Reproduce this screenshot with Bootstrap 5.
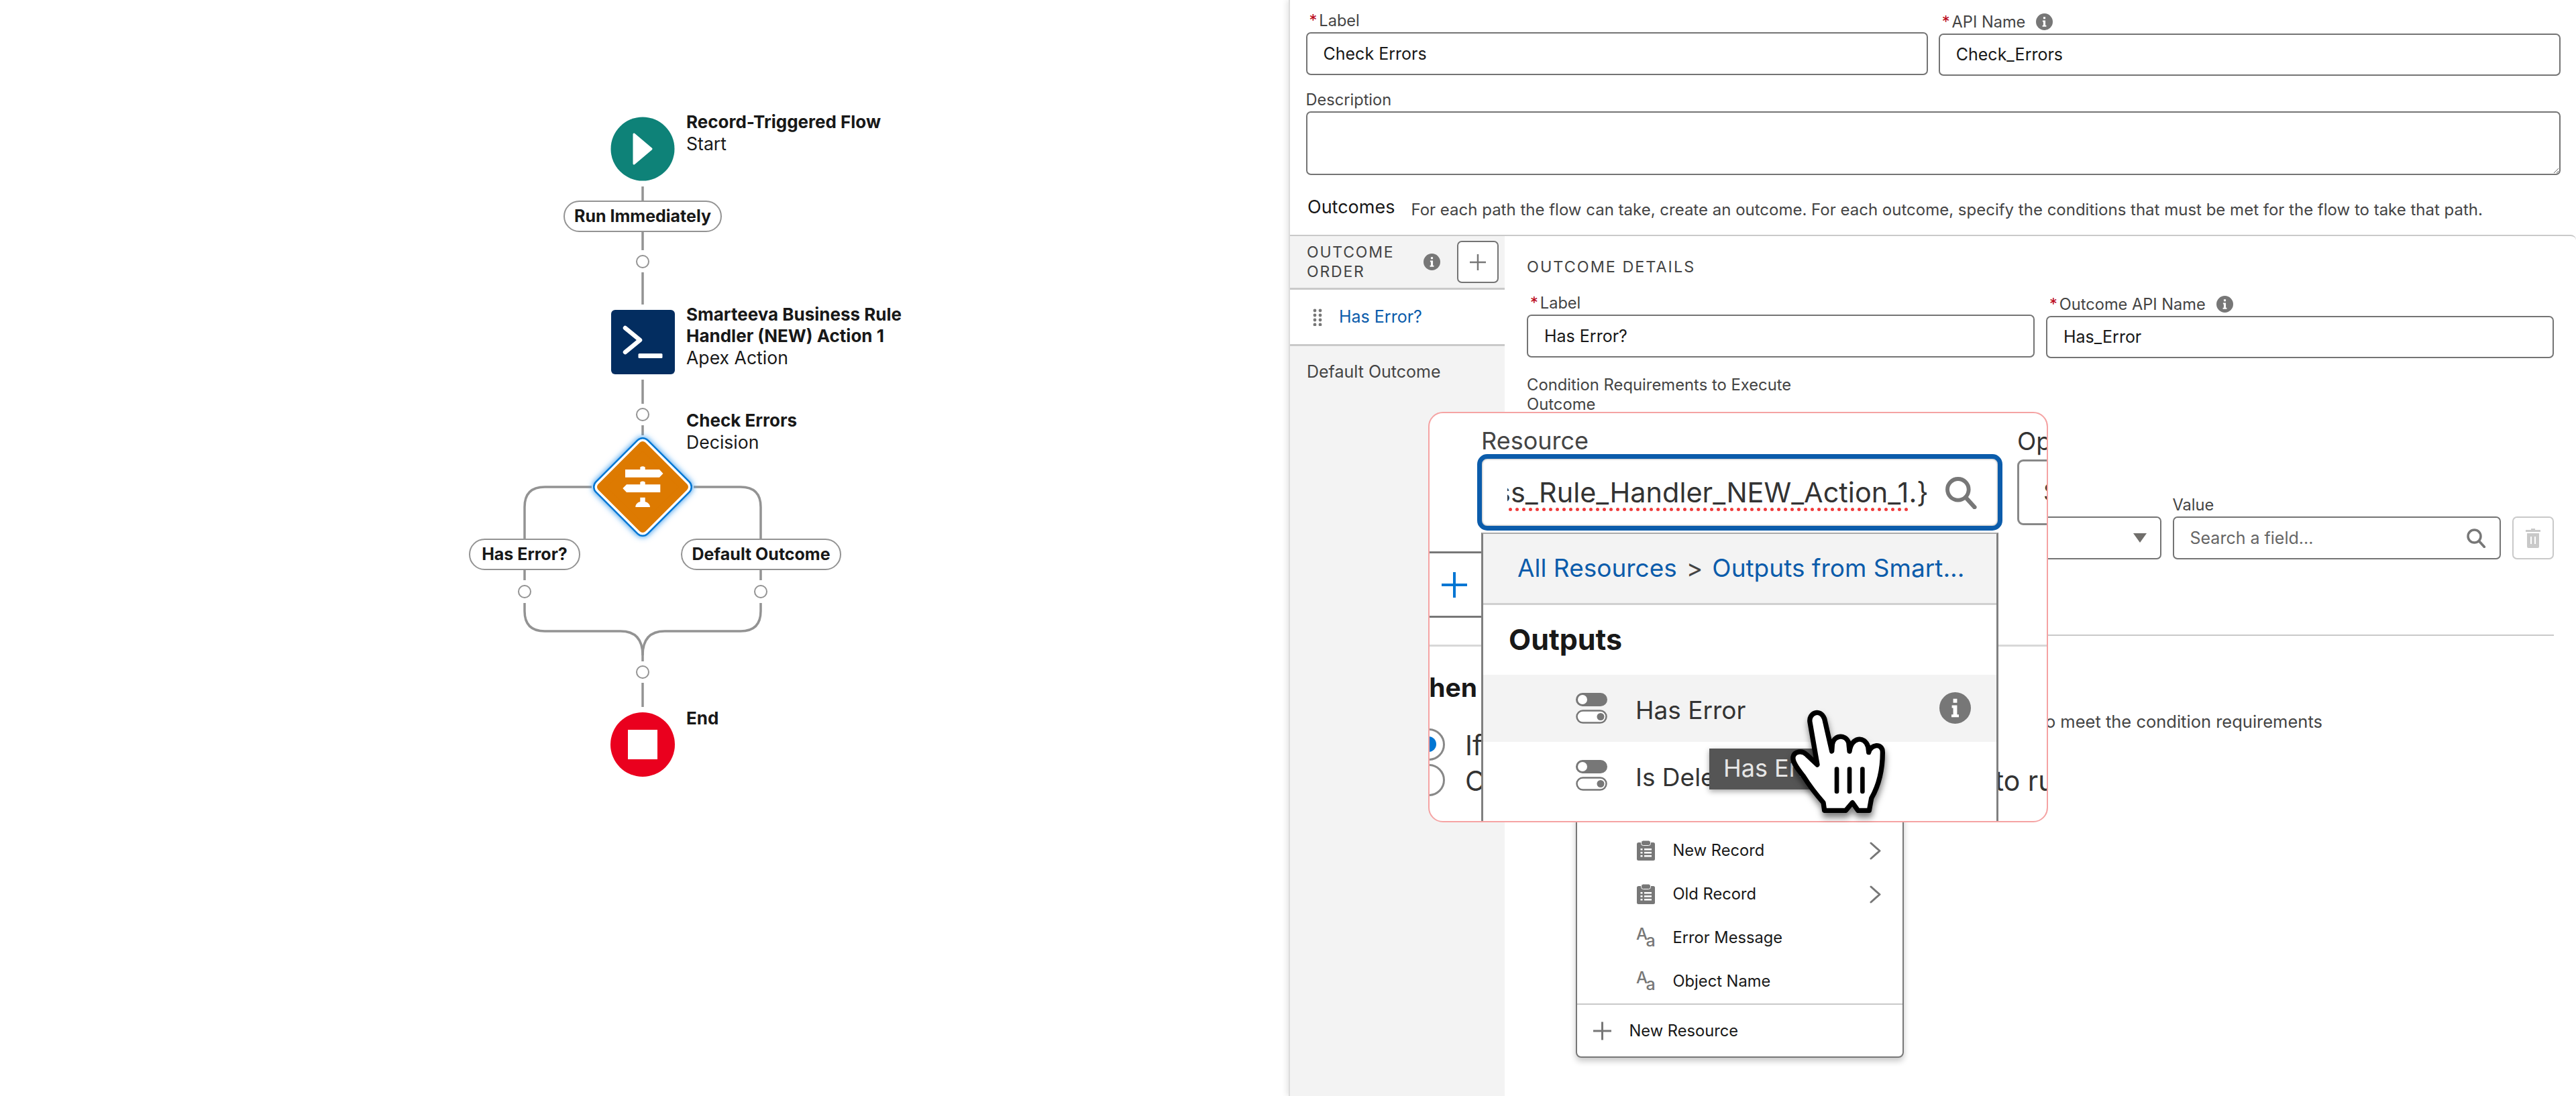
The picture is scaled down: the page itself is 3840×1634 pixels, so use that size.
<!DOCTYPE html>
<html lang="en">
<head>
  <meta charset="UTF-8" />
  <title>Flow Builder - Check Errors</title>
  <link href="https://cdn.jsdelivr.net/npm/bootstrap@5.3.0/dist/css/bootstrap.min.css" rel="stylesheet" />
  <style>
    body { margin: 0; background: #fff; color: #181818; font-family: "Inter", "Liberation Sans", sans-serif; }
    .sf-page { width: 3840px; height: 1634px; position: relative; overflow: hidden; }

    /* left: flow canvas */
    .flow-canvas { width: 1921px; height: 1634px; position: relative; flex: none; }
    .flow-lines { position: absolute; left: 0; top: 0; }
    .flow-label { position: absolute; left: 1023px; font-size: 26.6px; line-height: 32px; color: #181818; white-space: nowrap; }
    .flow-label b { font-weight: 700; font-size: 26px; display: block; }
    .fl-start { top: 166px; }
    .fl-apex { top: 453px; }
    .fl-check { top: 611px; }
    .fl-end { top: 1055px; }
    .flow-pill { position: absolute; height: 47px; border: 2.5px solid #939393; border-radius: 24px; background: #fff; font-size: 25px; font-weight: 700; display: flex; align-items: center; justify-content: center; white-space: nowrap; }
    .fp-run { left: 840px; top: 299px; width: 236px; }
    .fp-err { left: 699px; top: 803px; width: 166px; }
    .fp-def { left: 1015px; top: 803px; width: 239px; }

    /* right: properties panel */
    .sf-panel { flex: 1 1 auto; min-width: 0; border-left: 2px solid #dcdcdc; box-shadow: -3px 0 8px rgba(0,0,0,.10); background: #fff; display: flex; flex-direction: column; height: 1634px; }
    .sf-top { padding: 16px 23px 0 23.5px; }
    .sf-label { display: block; margin: 0 0 2px; font-size: 23.6px; line-height: 30px; color: #444; white-space: nowrap; }
    .sf-label i { color: #ba0517; font-style: normal; margin: 0 3px 0 5px; }
    .sf-desc-label { margin-top: 20.5px; }
    .sf-input.form-control { height: 63.5px; border: 2.5px solid #747474; border-radius: 7px; padding: 0 24px; font-size: 25px; color: #181818; box-shadow: none; }
    .sf-input::placeholder { color: #666; }
    .sf-info { width: 25px; height: 25px; flex: none; }
    .sf-desc.form-control { height: 95px; border: 2.5px solid #747474; border-radius: 7px; box-shadow: none; }
    .sf-out { height: 36px; margin-top: 30.5px; margin-bottom: 23px; padding-left: 2.5px; }
    .sf-out h2 { margin: 0; font-size: 27px; line-height: 36px; font-weight: 400; color: #181818; }
    .sf-out p { margin: 8px 0 0 24px; font-size: 24px; line-height: 28px; color: #444; white-space: nowrap; }
    .sf-box { flex: 1 1 auto; display: flex; min-height: 0; border-top: 2px solid #c9c9c9; border-top-right-radius: 8px; }
    .sf-side { width: 320px; flex: none; background: #f3f3f3; }
    .sf-side-head { height: 80px; padding: 0 9px 0 25px; display: flex; align-items: center; border-bottom: 3px solid #c9c9c9; }
    .sf-side-head span { flex: 1 1 auto; font-size: 23px; line-height: 29px; letter-spacing: 1.8px; color: #444; }
    .sf-add { width: 62px; height: 63px; margin-left: 25px; padding: 0; background: #fff; border: 2px solid #747474; border-radius: 7px; display: flex; align-items: center; justify-content: center; }
    .sf-side .list-group-item { border: 0; border-bottom: 3px solid #c9c9c9; border-radius: 0; background: #f3f3f3; font-size: 25px; color: #444; display: flex; align-items: center; padding: 0 0 3px 25px; height: 81px; }
    .sf-side .list-group-item.sf-active { background: #fff; color: #0b5cab; height: 84px; padding: 0 0 0 34px; gap: 24px; }
    .sf-body { flex: 1 1 auto; min-width: 0; padding: 0 33px; }
    .sf-caps { margin: 31px 0 0; font-size: 23.4px; line-height: 30px; letter-spacing: 2px; color: #444; }
    .sf-row { margin-top: 24px; gap: 17px; }
    .sf-row > div { flex: 1 1 0; }
    .sf-shift { padding-top: 1.5px; }
    .sf-cond { margin: 26px 0 0; width: 450px; font-size: 23.8px; line-height: 28.5px; color: #444; }
    .sf-logic { margin-top: 121px; gap: 17px; }
    .sf-select { width: 181px; height: 63.6px; border: 2.5px solid #747474; border-radius: 7px; margin-top: 32px; padding-right: 20px; display: flex; align-items: center; justify-content: flex-end; }
    .sf-caret { width: 0; height: 0; border-left: 10px solid transparent; border-right: 10px solid transparent; border-top: 14px solid #706e6b; }
    .sf-value { width: 489px; position: relative; }
    .sf-value svg { position: absolute; right: 22px; top: 49px; width: 30px; height: 30px; }
    .sf-trash { width: 62.5px; height: 63.6px; margin-top: 32px; background: #fff; border: 2px solid #c9c9c9; border-radius: 7px; padding: 0; display: flex; align-items: center; justify-content: center; }
    .sf-rule { margin: 112px 0 0; border: 0; border-top: 2px solid #c9c9c9; opacity: 1; }
    .sf-only { margin: 113px 0 0; padding-left: 63px; font-size: 25.5px; line-height: 30px; color: #444; white-space: nowrap; }

    /* resource menu, below the magnifier */
    .res-menu { position: absolute; left: 2348.5px; top: 1190px; width: 489px; height: 386.5px; background: #fff; border: 2.5px solid #777; border-radius: 0 0 8px 8px; box-shadow: 0 5px 10px rgba(0,0,0,.22); padding-top: 43.5px; font-size: 23.7px; color: #181818; }
    .res-item { height: 65px; display: flex; align-items: center; padding: 0 32px 0 89px; gap: 27px; }
    .res-item svg.ri { width: 27px; height: 30px; flex: none; overflow: visible; }
    .res-item svg.rc { width: 17px; height: 27px; margin-left: auto; flex: none; }
    .res-new { border-top: 2.5px solid #c9c9c9; height: 80px; padding-left: 24px; }

    /* magnified region */
    .mag { position: absolute; left: 2129px; top: 613.5px; width: 924px; height: 612.5px; border: 2px solid #f5a3a3; border-radius: 22px; background: #fff; overflow: hidden; font-size: 37px; color: #333; }
    .mag-bar { position: absolute; left: 0; top: 206.5px; width: 90px; height: 99px; border-top: 3.5px solid #777; border-bottom: 3.5px solid #777; display: flex; align-items: center; padding-left: 18px; }
    .mag-rule { position: absolute; left: 0; right: 0; top: 345px; border-top: 3px solid #d8d8d8; }
    .mag-when { position: absolute; left: 0; width: 71px; top: 386px; line-height: 46px; font-size: 39px; font-weight: 700; display: flex; justify-content: flex-end; overflow: hidden; color: #181818; }
    .mag-radio { position: absolute; left: -25px; width: 48px; height: 48px; border: 3.5px solid #888; border-radius: 50%; background: #fff; }
    .mag-radio.on::after { content: ""; position: absolute; left: 9px; top: 9px; width: 23px; height: 23px; border-radius: 50%; background: #0176d3; }
    .mag-r1 { top: 470.5px; }
    .mag-r2 { top: 523.5px; }
    .mag-opt { position: absolute; left: 53px; line-height: 46px; font-size: 41px; white-space: nowrap; }
    .mag-o1 { top: 472px; }
    .mag-o2 { top: 525px; }
    .mag-op { position: absolute; left: 876px; top: 20px; line-height: 44px; }
    .mag-opf { position: absolute; left: 876px; top: 69px; width: 120px; height: 98px; border: 3.5px solid #888; border-radius: 9px; padding-left: 36px; line-height: 91px; }
    .mag-col { position: relative; margin-left: 71px; width: 783px; padding-top: 21.5px; }
    .mag-col > label { display: block; margin: 0; padding-left: 6px; line-height: 40px; color: #444; font-size: 36px; }
    .mag-field { height: 113.5px; border: 7px solid #0b5cab; border-radius: 15px; background: #fff; display: flex; align-items: center; padding-left: 38px; box-shadow: inset 0 0 3px rgba(0,0,0,.5); }
    .mag-text { width: 628px; display: flex; justify-content: flex-end; overflow: hidden; white-space: nowrap; line-height: 62px; font-size: 41.4px; }
    .mag-text u { text-decoration: underline dotted #f03b3b 5px; text-underline-offset: 8px; }
    .mag-field svg { width: 50px; height: 50px; margin-left: 23px; flex: none; }
    .mag-drop { margin: 3px 0 0 6px; width: 771px; height: 432px; border-left: 3.5px solid #808080; border-right: 3.5px solid #808080; border-top: 2px solid #aaa; background: #fff; }
    .mag-crumb { height: 106px; background: #f3f3f3; border-bottom: 3.5px solid #d0d0d0; padding-left: 51px; display: flex; align-items: center; gap: 14px; white-space: nowrap; color: #444; }
    .mag-crumb a { color: #0b5cab; text-decoration: none; }
    .mag-head { height: 104px; padding-left: 38px; margin: 0; display: flex; align-items: center; font-size: 43px; font-weight: 700; color: #181818; }
    .mag-item { height: 100px; padding: 0 38px 0 138px; display: flex; align-items: center; gap: 42px; }
    .mag-item span { padding-top: 6px; }
    .mag-item.on { background: #f3f3f3; }
    .mag-item .mt { width: 47px; height: 46px; flex: none; }
    .mag-item .mi { width: 47px; height: 47px; margin-left: auto; flex: none; }
    .mag-tip { position: absolute; left: 417px; top: 500.5px; width: 170px; height: 61px; background: #555; color: #e6e6e6; padding-left: 21px; line-height: 58px; font-size: 36px; white-space: nowrap; overflow: hidden; box-shadow: 0 3px 8px rgba(0,0,0,.35); }

    .sf-hand { position: absolute; left: 2663px; top: 1050px; width: 153.4px; height: 166.7px; overflow: visible; filter: drop-shadow(1px 7px 5px rgba(0,0,0,.5)); }
  </style>
</head>
<body>

  <!-- shared icons -->
  <svg width="0" height="0" class="position-absolute">
    <symbol id="ic-info" viewBox="0 0 24 24">
      <circle cx="12" cy="12" r="12" fill="#777"/>
      <path d="M10.5 5h3v3h-3zM9.5 10h4v7h1.3v2H9.2v-2h1.3v-5h-1z" fill="#fff"/>
    </symbol>
    <symbol id="ic-search" viewBox="0 0 24 24">
      <circle cx="10" cy="10" r="7.6" fill="none" stroke="#777" stroke-width="2.8"/>
      <path d="M15.6 15.8 21.8 22.6" stroke="#777" stroke-width="3" stroke-linecap="round"/>
    </symbol>
    <symbol id="ic-toggle" viewBox="0 0 47 46">
      <rect x="0" y="0" width="47" height="20" rx="10" fill="#777"/>
      <circle cx="10" cy="10" r="7" fill="#fff"/>
      <rect x="1.5" y="26.5" width="44" height="18" rx="9" fill="#fff" stroke="#777" stroke-width="2.5"/>
      <circle cx="37" cy="35.5" r="5.5" fill="#777"/>
    </symbol>
    <symbol id="ic-clip" viewBox="0 0 27 30">
      <rect x="0" y="3" width="27" height="27" rx="2.5" fill="#777"/>
      <rect x="6.5" y="0" width="14" height="7.5" rx="3" fill="#777" stroke="#fff" stroke-width="1"/>
      <path d="M5.5 12h3v2.4h-3zM11 12h11v2.4H11zM5.5 17h3v2.4h-3zM11 17h11v2.4H11zM5.5 22h3v2.4h-3zM11 22h11v2.4H11z" fill="#fff"/>
    </symbol>
    <symbol id="ic-aa" viewBox="0 0 28 30" overflow="visible">
      <text x="-1" y="18" font-family="Inter, sans-serif" font-size="25" font-weight="500" fill="#777">A</text>
      <text x="14" y="29" font-family="Inter, sans-serif" font-size="26" font-weight="500" fill="#777">a</text>
    </symbol>
    <symbol id="ic-chev" viewBox="0 0 17 27">
      <path d="M2 2 15 13.5 2 25" fill="none" stroke="#777" stroke-width="3" stroke-linecap="round" stroke-linejoin="round"/>
    </symbol>
  </svg>

  <div class="sf-page d-flex">

    <!-- Canvas do fluxo -->
    <section class="flow-canvas">
      <svg class="flow-lines" width="1921" height="1634" viewBox="0 0 1921 1634">
        <defs>
          <filter id="glow" x="-30%" y="-30%" width="160%" height="160%"><feGaussianBlur stdDeviation="4"/></filter>
        </defs>
        <g fill="none" stroke="#939393" stroke-width="3.5">
          <path d="M958 278V299M958 345V373M958 406V454M958 566V602M958 634V649"/>
          <path d="M882 726H812Q782 726 782 756V803M782 850V865M782 899V911Q782 941 812 941H925Q958 941 958 977V986"/>
          <path d="M1034 726H1104Q1134 726 1134 756V803M1134 850V865M1134 899V911Q1134 941 1104 941H991Q958 941 958 977"/>
          <path d="M958 1018V1054"/>
        </g>
        <g fill="#fff" stroke="#939393" stroke-width="2">
          <circle cx="958" cy="390" r="9"/>
          <circle cx="958" cy="618" r="9"/>
          <circle cx="782" cy="882" r="9"/>
          <circle cx="1134" cy="882" r="9"/>
          <circle cx="958" cy="1002" r="9"/>
        </g>
        <!-- start -->
        <circle cx="958" cy="222" r="47.5" fill="#0e8278"/>
        <path d="M945 200 971 222 945 244Z" fill="#fff" stroke="#fff" stroke-width="3" stroke-linejoin="round"/>
        <!-- apex -->
        <rect x="911" y="462" width="95" height="96" rx="6" fill="#032d60"/>
        <path d="M932 489 954 507 932 525" fill="none" stroke="#fff" stroke-width="6.5" stroke-linecap="round" stroke-linejoin="round"/>
        <rect x="951.5" y="527" width="36" height="7" rx="1.5" fill="#fff"/>
        <!-- decision -->
        <path d="M958 664 1020 726 958 788 896 726Z" fill="#4aa3ee" stroke="#4aa3ee" stroke-width="26" stroke-linejoin="round" filter="url(#glow)"/>
        <path d="M958 664 1020 726 958 788 896 726Z" fill="#0176d3" stroke="#0176d3" stroke-width="24" stroke-linejoin="round"/>
        <path d="M958 664 1020 726 958 788 896 726Z" fill="#fff" stroke="#fff" stroke-width="19" stroke-linejoin="round"/>
        <path d="M958 664 1020 726 958 788 896 726Z" fill="#dd7a01" stroke="#dd7a01" stroke-width="12" stroke-linejoin="round"/>
        <path d="M932 700H954.3V696.5Q958 694 961.7 696.5V700H983L988.5 706 983 711.7H932ZM934 722.3H954.3V718.8Q958 716.3 961.7 718.8V722.3H984.3V734H934L928.3 728ZM954.3 741.7H961.7V748C966 749 969 752 969 756H947.3C947.3 752 950 749 954.3 748Z" fill="#fff"/>
        <!-- end -->
        <circle cx="958" cy="1110" r="48" fill="#ea001e"/>
        <rect x="936" y="1088" width="44" height="44" fill="#fff"/>
      </svg>

      <div class="flow-label fl-start"><b>Record-Triggered Flow</b>Start</div>
      <div class="flow-pill fp-run">Run Immediately</div>
      <div class="flow-label fl-apex"><b>Smarteeva Business Rule</b><b>Handler (NEW) Action 1</b>Apex Action</div>
      <div class="flow-label fl-check"><b>Check Errors</b>Decision</div>
      <div class="flow-pill fp-err">Has Error?</div>
      <div class="flow-pill fp-def">Default Outcome</div>
      <div class="flow-label fl-end"><b>End</b></div>
    </section>

    <!-- Painel de propriedades -->
    <main class="sf-panel">
      <div class="sf-top">
        <div class="d-flex gap-3">
          <div class="flex-fill w-50">
            <label class="sf-label form-label"><i>*</i>Label</label>
            <input class="form-control sf-input" value="Check Errors" />
          </div>
          <div class="flex-fill w-50 sf-shift">
            <label class="sf-label form-label d-flex align-items-center"><i>*</i>API Name<svg class="sf-info ms-3"><use href="#ic-info"/></svg></label>
            <input class="form-control sf-input" value="Check_Errors" />
          </div>
        </div>
        <label class="sf-label form-label sf-desc-label">Description</label>
        <textarea class="form-control sf-desc"></textarea>
        <div class="sf-out d-flex">
          <h2>Outcomes</h2>
          <p>For each path the flow can take, create an outcome. For each outcome, specify the conditions that must be met for the flow to take that path.</p>
        </div>
      </div>

      <div class="sf-box">
        <aside class="sf-side">
          <div class="sf-side-head">
            <span>OUTCOME<br>ORDER</span>
            <svg class="sf-info"><use href="#ic-info"/></svg>
            <button class="btn sf-add" type="button">
              <svg width="26" height="26" viewBox="0 0 26 26"><path d="M13 1V25M1 13H25" stroke="#777" stroke-width="2.5"/></svg>
            </button>
          </div>
          <div class="list-group list-group-flush">
            <a class="list-group-item sf-active" href="#">
              <svg width="15" height="26" viewBox="0 0 15 26"><g fill="#777"><circle cx="3" cy="3" r="2.4"/><circle cx="11" cy="3" r="2.4"/><circle cx="3" cy="10" r="2.4"/><circle cx="11" cy="10" r="2.4"/><circle cx="3" cy="17" r="2.4"/><circle cx="11" cy="17" r="2.4"/><circle cx="3" cy="24" r="2.4"/><circle cx="11" cy="24" r="2.4"/></g></svg>
              Has Error?
            </a>
            <a class="list-group-item" href="#">Default Outcome</a>
          </div>
        </aside>

        <div class="sf-body">
          <h3 class="sf-caps fw-normal">OUTCOME DETAILS</h3>
          <div class="sf-row d-flex">
            <div>
              <label class="sf-label form-label"><i>*</i>Label</label>
              <input class="form-control sf-input" value="Has Error?" />
            </div>
            <div class="sf-shift">
              <label class="sf-label form-label d-flex align-items-center"><i>*</i>Outcome API Name<svg class="sf-info ms-3"><use href="#ic-info"/></svg></label>
              <input class="form-control sf-input" value="Has_Error" />
            </div>
          </div>
          <p class="sf-cond">Condition Requirements to Execute Outcome</p>
          <div class="sf-logic d-flex">
            <div class="flex-grow-1"></div>
            <div class="sf-select"><span class="sf-caret"></span></div>
            <div class="sf-value">
              <label class="sf-label form-label">Value</label>
              <input class="form-control sf-input" placeholder="Search a field..." />
              <svg><use href="#ic-search"/></svg>
            </div>
            <button class="btn sf-trash" type="button" aria-label="Delete">
              <svg width="24" height="30" viewBox="0 0 24 30"><path d="M9 3V1h6v2h8v3H1V3zM3 8h18v20a2 2 0 0 1-2 2H5a2 2 0 0 1-2-2zM8 13v11h2V13zM14 13v11h2V13z" fill="#c9c9c9" fill-rule="evenodd"/></svg>
            </button>
          </div>
          <hr class="sf-rule" />
          <p class="sf-only">Only if the record that triggered the flow to run is updated to meet the condition requirements</p>
        </div>
      </div>
    </main>

    <!-- Menu de recursos (parte de baixo) -->
    <div class="res-menu">
      <div class="res-item"><svg class="ri"><use href="#ic-clip"/></svg>New Record<svg class="rc"><use href="#ic-chev"/></svg></div>
      <div class="res-item"><svg class="ri"><use href="#ic-clip"/></svg>Old Record<svg class="rc"><use href="#ic-chev"/></svg></div>
      <div class="res-item"><svg class="ri"><use href="#ic-aa"/></svg>Error Message</div>
      <div class="res-item"><svg class="ri"><use href="#ic-aa"/></svg>Object Name</div>
      <div class="res-item res-new">
        <svg class="ri" viewBox="0 0 27 27"><path d="M13.5 0V27M0 13.5H27" stroke="#777" stroke-width="3"/></svg>
        New Resource
      </div>
    </div>

    <!-- Lupa sobre o painel -->
    <div class="mag">
      <div class="mag-rule"></div>
      <div class="mag-bar">
        <svg width="38" height="38" viewBox="0 0 38 38"><path d="M19 0V38M0 19H38" stroke="#0176d3" stroke-width="4"/></svg>
      </div>
      <div class="mag-when">When</div>
      <div class="mag-radio on mag-r1"></div>
      <div class="mag-radio mag-r2"></div>
      <div class="mag-opt mag-o1">If the condition requirements are met</div>
      <div class="mag-opt mag-o2">Only if the record that triggered the flow to run is updated</div>
      <div class="mag-op">Operator</div>
      <div class="mag-opf">Select</div>

      <div class="mag-col">
        <label>Resource</label>
        <div class="mag-field">
          <div class="mag-text"><div><u>{!Smarteeva_Business_Rule_Handler_NEW_Action_1</u>.}</div></div>
          <svg><use href="#ic-search"/></svg>
        </div>
        <div class="mag-drop">
          <div class="mag-crumb"><a href="#">All Resources</a><span>&gt;</span><a href="#">Outputs from Smart...</a></div>
          <h4 class="mag-head">Outputs</h4>
          <div class="mag-item on">
            <svg class="mt"><use href="#ic-toggle"/></svg>
            <span>Has Error</span>
            <svg class="mi"><use href="#ic-info"/></svg>
          </div>
          <div class="mag-item">
            <svg class="mt"><use href="#ic-toggle"/></svg>
            <span>Is Deleted</span>
          </div>
        </div>
      </div>
      <div class="mag-tip">Has Error</div>
    </div>

    <!-- Cursor -->
    <svg class="sf-hand" viewBox="340 150 460 500">
      <path d="M370 385C375 360 410 355 430 375L478 420 445 230C438 190 490 165 510 215L543 360 545 330C550 290 600 280 618 320L622 360C630 295 690 290 705 340L708 365C715 330 770 320 770 365 770 430 760 500 720 570L710 625H660L635 590 605 625H510L505 590C470 550 440 510 415 470 395 445 365 410 370 385Z" fill="#fff" stroke="#000" stroke-width="22" stroke-linejoin="round"/>
      <path d="M565 440V540M622 440V540M680 440V540" stroke="#000" stroke-width="20" stroke-linecap="round"/>
    </svg>
  </div>

</body>
</html>
